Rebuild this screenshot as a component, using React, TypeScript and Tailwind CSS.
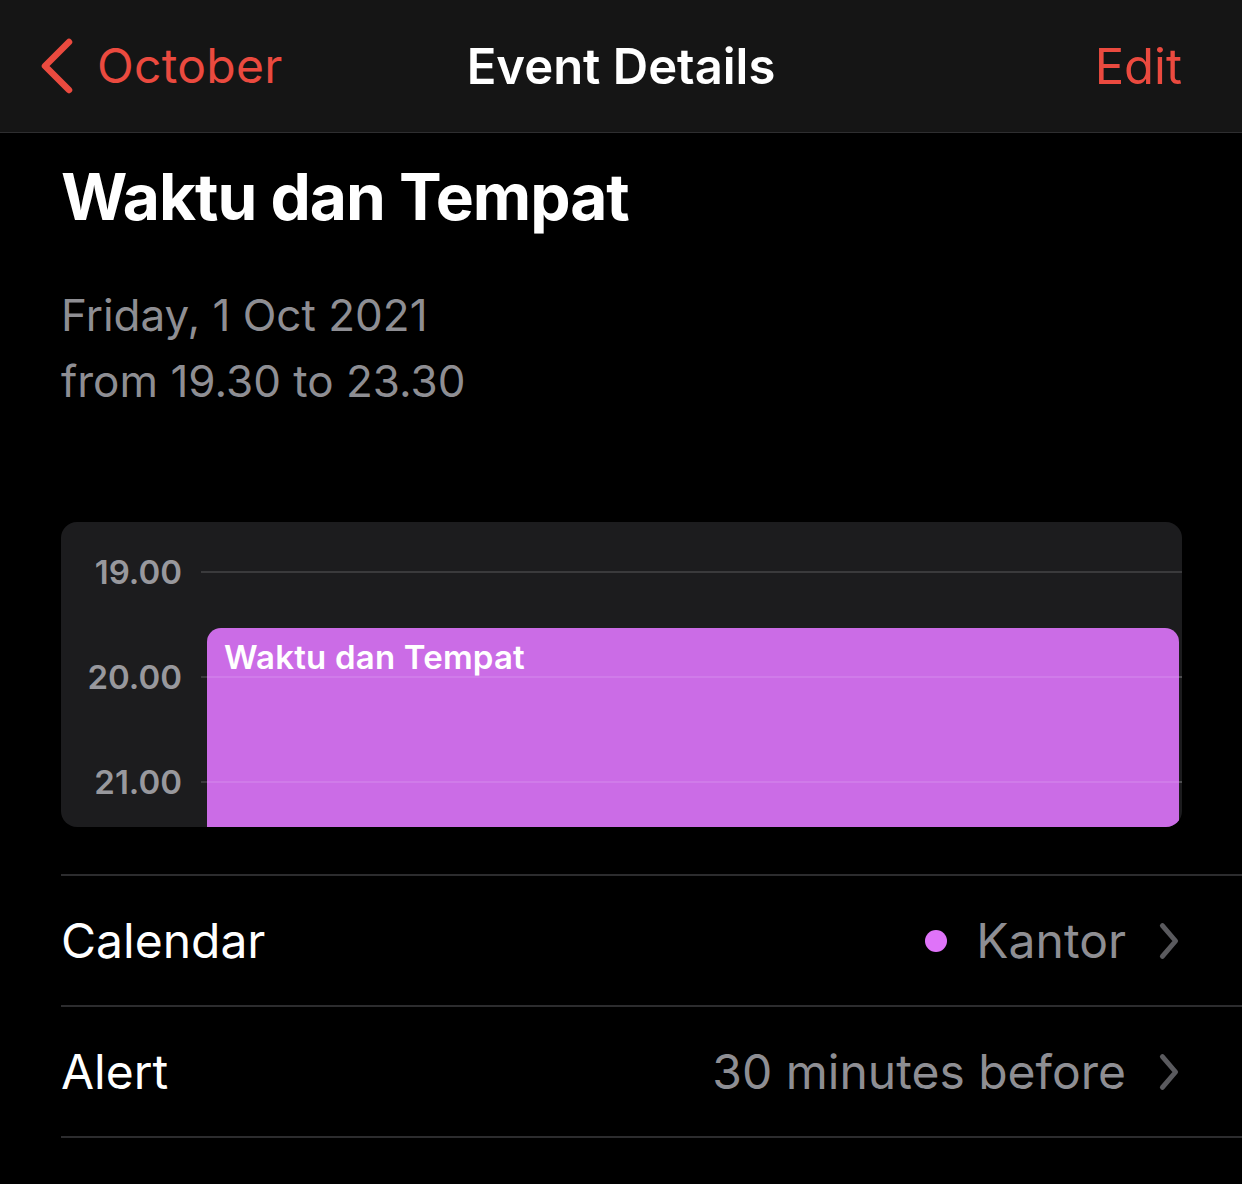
import React from "react";

function Chevron({ className }: { className?: string }) {
  return (
    <svg viewBox="0 0 20 36" className={className} fill="none">
      <path d="M4 4 L16 18 L4 32" stroke="currentColor" strokeWidth="4.5" strokeLinecap="round" strokeLinejoin="round" />
    </svg>
  );
}

export default function App() {
  const hours = ["19.00", "20.00", "21.00"];

  return (
    <div className="w-[1242px] h-[1184px] bg-black overflow-hidden font-['Inter','Noto_Sans',sans-serif]">
      {/* nav bar */}
      <div className="h-[133px] bg-[#151515] border-b border-[#2e2e30] flex items-center px-[38px] relative">
        <div className="flex items-center gap-[23px] text-[#eb4a3f]">
          <svg viewBox="0 0 36 60" className="w-[36px] h-[60px]" fill="none">
            <path d="M31 6 L7 30 L31 54" stroke="currentColor" strokeWidth="6.5" strokeLinecap="round" strokeLinejoin="round" />
          </svg>
          <span className="text-[48px] leading-none tracking-[0.3px]">October</span>
        </div>
        <div className="absolute left-0 right-0 text-center text-white text-[49px] font-semibold leading-none pointer-events-none">
          Event Details
        </div>
        <span className="ml-auto mr-[22px] text-[#eb4a3f] text-[49px] leading-none">Edit</span>
      </div>

      <div className="pl-[61px]">
        <h1 className="text-white text-[64px] font-bold leading-none mt-[32px] tracking-[-1px]">Waktu dan Tempat</h1>

        <div className="mt-[53px] text-[#8e8e93] text-[44px] leading-[66px]">
          <div>Friday, 1 Oct 2021</div>
          <div>from 19.30 to 23.30</div>
        </div>

        {/* day preview */}
        <div className="mt-[108px] mr-[60px] h-[305px] rounded-[16px] bg-[#1c1c1e] overflow-hidden relative">
          <div className="pt-[27px] flex flex-col gap-[59px]">
            {hours.map((h) => (
              <div key={h} className="flex items-center h-[46px]">
                <span className="w-[121px] text-right text-[#98989d] text-[33px] font-semibold leading-none">{h}</span>
                <div className="ml-[19px] flex-1 h-[2px] bg-[#3a3a3c]" />
              </div>
            ))}
          </div>
          <div className="absolute left-[146px] right-[3px] top-[106px] h-[260px] rounded-[14px] bg-[#cb6ce6] px-[17px] pt-[13px]">
            <span className="text-white text-[33px] font-semibold leading-none tracking-[0.2px]">Waktu dan Tempat</span>
          </div>
          <div className="absolute left-[146px] right-0 top-[154px] h-[2px] bg-white/10" />
          <div className="absolute left-[146px] right-0 top-[259px] h-[2px] bg-white/10" />
        </div>

        {/* rows */}
        <div className="mt-[47px] border-t-2 border-[#2c2c2e]">
          <div className="h-[131px] flex items-center border-b-2 border-[#2c2c2e] pr-[62px]">
            <span className="text-white text-[48px] leading-none">Calendar</span>
            <span className="ml-auto w-[22px] h-[22px] rounded-full bg-[#df73f9]" />
            <span className="ml-[29px] text-[#8e8e93] text-[48px] leading-none">Kantor</span>
            <Chevron className="ml-[32px] w-[22px] h-[40px] text-[#5a5a5e]" />
          </div>
          <div className="h-[131px] flex items-center border-b-2 border-[#2c2c2e] pr-[62px]">
            <span className="text-white text-[48px] leading-none">Alert</span>
            <span className="ml-auto text-[#8e8e93] text-[48px] leading-none">30 minutes before</span>
            <Chevron className="ml-[32px] w-[22px] h-[40px] text-[#5a5a5e]" />
          </div>
        </div>
      </div>
    </div>
  );
}
